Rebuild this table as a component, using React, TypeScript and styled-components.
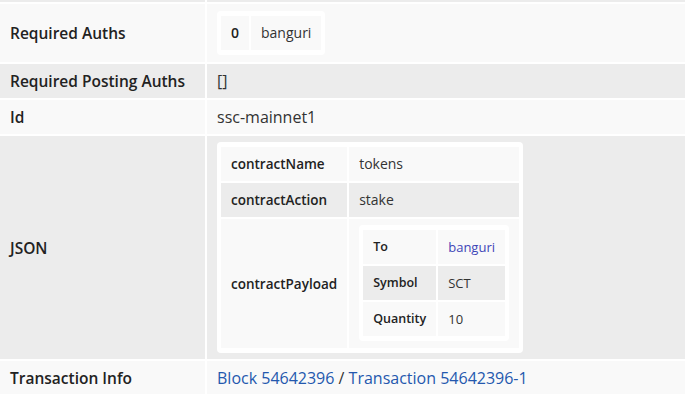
import React from "react";
import styled, { createGlobalStyle } from "styled-components";

type Pair = { key: string; value: React.ReactNode; boxed?: boolean };
type Size = "outer" | "nested" | "payload";

const GlobalStyle = createGlobalStyle`
  body {
    margin: 0;
    background: #fff;
    font-family: "Open Sans", "Liberation Sans", sans-serif;
    font-size: 16px;
    color: #333;
  }
`;

const shade = (on: boolean) => (on ? "#ececec" : "#f9f9f9");

const Page = styled.div`
  overflow: hidden;
  height: 394px;
`;

const Details = styled.div`
  display: flex;
  flex-direction: column;
  gap: 2px;
`;

const Row = styled.div`
  display: grid;
  grid-template-columns: 205px 1fr;
  column-gap: 2px;
`;

// bottom edge of the row scrolled above the fold
const Tail = styled.div`
  height: 2px;
  background: #ececec;
`;

const Label = styled.div<{ $shade: boolean }>`
  display: flex;
  align-items: center;
  padding: 7px 10px;
  line-height: 20px;
  font-size: 15.5px;
  font-weight: 600;
  color: #222;
  background: ${(p) => shade(p.$shade)};
`;

const Value = styled.div<{ $shade: boolean; $boxed?: boolean }>`
  display: flex;
  align-items: center;
  padding: ${(p) => (p.$boxed ? "6px 10px 6px" : "7px 10px")};
  line-height: 20px;
  background: ${(p) => shade(p.$shade)};
`;

const Box = styled.div`
  display: block;
  width: fit-content;
  background: #fff;
  border-radius: 4px;
  padding: 3px 2px;
`;

const Table = styled.table`
  border-collapse: separate;
  border-spacing: 2px;
`;

const keySize: Record<Size, string> = { outer: "14px", nested: "13.5px", payload: "12.5px" };
const valueSize: Record<Size, string> = { outer: "14px", nested: "14px", payload: "13px" };

const Key = styled.th<{ $shade: boolean; $size: Size }>`
  padding: 7px 10px;
  line-height: 20px;
  font-size: ${(p) => keySize[p.$size]};
  font-weight: 600;
  text-align: left;
  color: #222;
  white-space: nowrap;
  background: ${(p) => shade(p.$shade)};
`;

const Cell = styled.td<{ $shade: boolean; $size: Size; $boxed?: boolean }>`
  padding: ${(p) => (p.$boxed ? "6px 10px 7px" : "7px 10px")};
  line-height: 20px;
  font-size: ${(p) => valueSize[p.$size]};
  white-space: nowrap;
  background: ${(p) => shade(p.$shade)};
`;

const Link = styled.a<{ $tone?: string }>`
  color: ${(p) => p.$tone ?? "#2458ae"};
  text-decoration: none;
`;

const KeyValue = ({ rows, size }: { rows: Pair[]; size: Size }) => (
  <Box>
    <Table>
      <tbody>
        {rows.map((r, i) => (
          <tr key={r.key}>
            <Key $shade={i % 2 === 1} $size={size}>
              {r.key}
            </Key>
            <Cell $shade={i % 2 === 1} $size={size} $boxed={r.boxed}>
              {r.value}
            </Cell>
          </tr>
        ))}
      </tbody>
    </Table>
  </Box>
);

const payload: Pair[] = [
  { key: "To", value: <Link $tone="#3f45b8" href="#">banguri</Link> },
  { key: "Symbol", value: "SCT" },
  { key: "Quantity", value: "10" },
];

const json: Pair[] = [
  { key: "contractName", value: "tokens" },
  { key: "contractAction", value: "stake" },
  { key: "contractPayload", value: <KeyValue rows={payload} size="payload" />, boxed: true },
];

const details: Pair[] = [
  { key: "Required Auths", value: <KeyValue rows={[{ key: "0", value: "banguri" }]} size="outer" /> },
  { key: "Required Posting Auths", value: "[]" },
  { key: "Id", value: "ssc-mainnet1" },
  { key: "JSON", value: <KeyValue rows={json} size="nested" />, boxed: true },
  {
    key: "Transaction Info",
    value: (
      <span>
        <Link href="#">Block 54642396</Link> / <Link href="#">Transaction 54642396-1</Link>
      </span>
    ),
  },
];

export default function App() {
  return (
    <Page>
      <GlobalStyle />
      <Details>
        <Row>
          <Tail />
          <Tail />
        </Row>
        {details.map((d, i) => (
          <Row key={d.key}>
            <Label $shade={i % 2 === 1}>{d.key}</Label>
            <Value $shade={i % 2 === 1} $boxed={d.boxed}>
              {d.value}
            </Value>
          </Row>
        ))}
      </Details>
    </Page>
  );
}
